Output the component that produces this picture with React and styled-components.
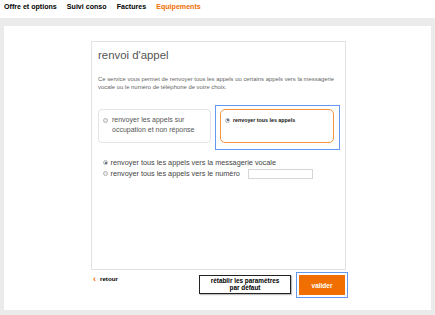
import React from 'react';
import styled, { createGlobalStyle } from 'styled-components';

const GlobalStyle = createGlobalStyle`
    html, body {
        margin: 0;
        padding: 0;
        background: #ebebeb;
    }
    body {
        font-family: "Liberation Sans", Arial, sans-serif;
        width: 435px;
        height: 315px;
        overflow: hidden;
    }
`;

const navItems = ['Offre et options', 'Suivi conso', 'Factures', 'Equipements'];

const Radio = ({ checked }) => <RadioDot $checked={checked} />;

export default function App() {
    return <>
        <GlobalStyle />
        <Nav>
            {navItems.map((item, i) => (
                <NavItem key={item} $active={i === navItems.length - 1}>{item}</NavItem>
            ))}
        </Nav>
        <Main>
            <Panel>
                <Column>
                    <Card>
                        <Title>renvoi d'appel</Title>
                        <Description>
                            Ce service vous permet de renvoyer tous les appels ou certains appels vers la messagerie
                            vocale ou le numéro de téléphone de votre choix.
                        </Description>
                        <Options>
                            <OptionBox>
                                <Radio />
                                <OptionLabel>renvoyer les appels sur occupation et non réponse</OptionLabel>
                            </OptionBox>
                            <FocusRing>
                                <SelectedBox>
                                    <Radio checked />
                                    <SelectedLabel>renvoyer tous les appels</SelectedLabel>
                                </SelectedBox>
                            </FocusRing>
                        </Options>
                        <Choices>
                            <ChoiceRow>
                                <Radio checked />
                                <ChoiceLabel>renvoyer tous les appels vers la messagerie vocale</ChoiceLabel>
                            </ChoiceRow>
                            <ChoiceRow>
                                <Radio />
                                <ChoiceLabel>renvoyer tous les appels vers le numéro</ChoiceLabel>
                                <NumberInput type="text" />
                            </ChoiceRow>
                        </Choices>
                    </Card>
                    <Footer>
                        <BackLink>
                            <Chevron>‹</Chevron>
                            retour
                        </BackLink>
                        <Actions>
                            <ResetButton>rétablir les paramètres<br />par défaut</ResetButton>
                            <ValidateButton>valider</ValidateButton>
                        </Actions>
                    </Footer>
                </Column>
            </Panel>
        </Main>
    </>;
}

const Nav = styled.nav`
    display: flex;
    gap: 10px;
    height: 18px;
    box-sizing: border-box;
    padding: 2px 4px 0;
    background: #fff;
`;

const NavItem = styled.span`
    font-size: 7.1px;
    line-height: 10px;
    font-weight: bold;
    color: ${({ $active }) => ($active ? '#f16e00' : '#000')};
`;

const Main = styled.main`
    height: 297px;
    box-sizing: border-box;
    padding: 8px 4px 5px;
    background: #ebebeb;
`;

const Panel = styled.section`
    height: 284px;
    box-sizing: border-box;
    padding-top: 15px;
    background: #fff;
`;

const Column = styled.div`
    width: 255px;
    margin-left: 87px;
`;

const Card = styled.div`
    height: 229px;
    box-sizing: border-box;
    border: 1px solid #e2e2e2;
    padding: 6px 4px 0 6px;
`;

const Title = styled.h1`
    margin: 0;
    font-size: 11.4px;
    line-height: 14px;
    font-weight: normal;
    color: #555;
`;

const Description = styled.p`
    margin: 14px 0 0;
    font-size: 5.9px;
    line-height: 7.5px;
    color: #666;
`;

const Options = styled.div`
    display: flex;
    align-items: flex-start;
    gap: 4px;
    margin-top: 14px;
`;

const OptionBox = styled.div`
    display: flex;
    align-items: flex-start;
    gap: 4px;
    width: 113px;
    height: 34px;
    box-sizing: border-box;
    margin-top: 4px;
    padding: 5px 6px 0 4px;
    border: 1px solid #e4e4e4;
    border-radius: 4px;

    > span:first-child {
        margin-top: 2.5px;
    }
`;

const OptionLabel = styled.span`
    font-size: 7px;
    line-height: 10px;
    color: #555;
`;

const FocusRing = styled.div`
    width: 125px;
    height: 45px;
    box-sizing: border-box;
    padding: 3px 5px 0 4px;
    border: 1.2px solid rgb(100, 152, 240);
`;

const SelectedBox = styled.div`
    display: flex;
    align-items: center;
    gap: 3px;
    height: 34px;
    box-sizing: border-box;
    padding: 0 0 12px 4px;
    border: 1.5px solid #f5953f;
    border-radius: 5px;
`;

const SelectedLabel = styled.span`
    font-size: 5.3px;
    line-height: 7px;
    font-weight: bold;
    color: #111;
`;

const RadioDot = styled.span`
    position: relative;
    flex: none;
    width: 5px;
    height: 5px;
    box-sizing: border-box;
    border: 1px solid #b4b4b4;
    border-radius: 50%;
    background: #ececec;

    &::after {
        content: '';
        display: ${({ $checked }) => ($checked ? 'block' : 'none')};
        position: absolute;
        left: 50%;
        top: 50%;
        width: 2px;
        height: 2px;
        margin: -1px 0 0 -1px;
        border-radius: 50%;
        background: #34577d;
    }
`;

const Choices = styled.div`
    display: flex;
    flex-direction: column;
    margin: 7px 0 0 5px;
`;

const ChoiceRow = styled.label`
    display: flex;
    align-items: center;
    gap: 2.5px;
    height: 11px;
`;

const ChoiceLabel = styled.span`
    font-size: 7.3px;
    line-height: 11px;
    color: #444;
`;

const NumberInput = styled.input`
    width: 65px;
    height: 10px;
    box-sizing: border-box;
    margin: 1px 0 0 6px;
    padding: 0;
    border: 1px solid #d6d6d6;
    background: #fff;
    outline: none;
`;

const Footer = styled.div`
    display: flex;
    justify-content: space-between;
    align-items: flex-start;
    margin-top: 5px;
    padding: 0 1px 0 2px;
`;

const BackLink = styled.a`
    display: flex;
    align-items: center;
    gap: 4px;
    font-size: 6.2px;
    line-height: 8px;
    font-weight: bold;
    color: #000;
`;

const Chevron = styled.span`
    font-size: 9px;
    line-height: 8px;
    font-weight: bold;
    color: #f16e00;
`;

const Actions = styled.div`
    display: flex;
    gap: 8px;
`;

const ResetButton = styled.button`
    width: 92px;
    height: 19px;
    box-sizing: border-box;
    padding: 0;
    border: 1.5px solid #222;
    background: #fff;
    box-shadow: 1px 1px 1px rgba(0, 0, 0, 0.25);
    font-family: inherit;
    font-size: 6.4px;
    line-height: 6.5px;
    font-weight: bold;
    color: #000;
`;

const ValidateButton = styled.button`
    width: 46px;
    height: 20px;
    padding: 0;
    border: none;
    background: #f16e00;
    outline: 1px solid rgb(100, 152, 240);
    outline-offset: 2.5px;
    font-family: inherit;
    font-size: 6.5px;
    font-weight: bold;
    color: #fff;
`;
